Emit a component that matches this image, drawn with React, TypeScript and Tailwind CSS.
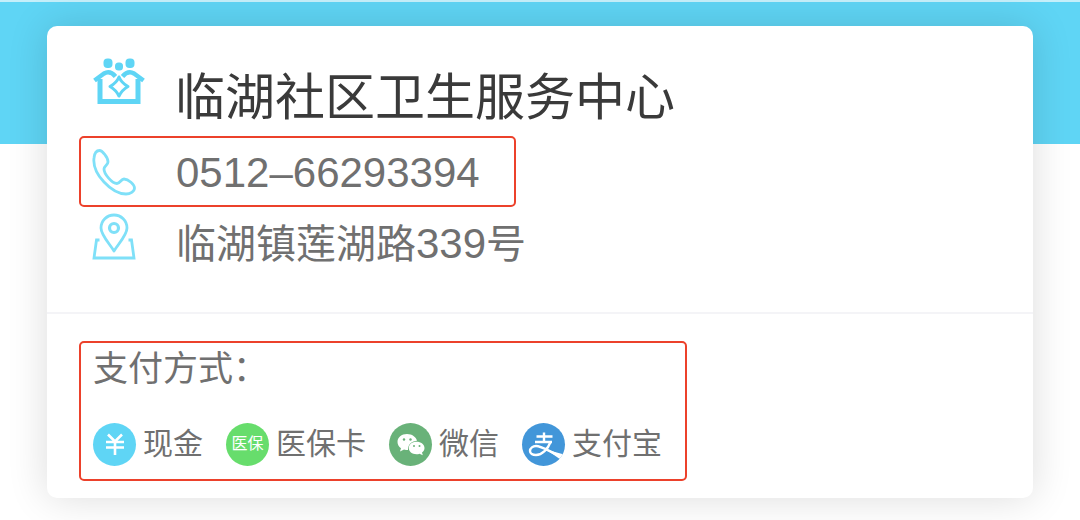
import type { ReactNode } from "react";

function ClinicIcon() {
  return (
    <svg viewBox="0 0 52 48" className="h-12 w-13 shrink-0" fill="none" aria-hidden="true">
      <g fill="#5fd5f5">
        <rect x="10.500" y="0.500" width="9" height="9.500" rx="4" />
        <rect x="22" y="4.500" width="8" height="8" rx="3.500" />
        <rect x="32.500" y="0.500" width="9" height="9.500" rx="4" />
      </g>
      <g stroke="#5fd5f5" strokeLinejoin="round">
        <path d="M7 21V43.500H45V21" strokeWidth="5" strokeLinejoin="miter" />
        <path d="M1.500 22.500L11 15.500Q17 12 22.500 18.500" strokeWidth="4.500" />
        <path d="M50.500 22.500L41 15.500Q35 12 29.500 18.500" strokeWidth="4.500" />
        <path d="M26 19Q28.500 25 35 28.500Q29 32 26 38Q23 32 17 28.500Q23.500 25 26 19Z" strokeWidth="3" />
      </g>
    </svg>
  );
}

function PhoneIcon() {
  return (
    <svg viewBox="0 0 44 48" className="h-12 w-11 shrink-0" fill="none" stroke="#7fe0f8" strokeWidth="2.800" strokeLinejoin="round" aria-hidden="true">
      <path d="M2 10C2.500 5 5 2.500 7.500 2.500C10 2.500 16 9 16 14C16 17 12 18 12 21C12 26 20 35.500 25 35.500C28 35.500 29 31 32 31C36.500 31 42.500 36.500 42.500 40C42.500 43.500 38 46 34 46C20 46 0 26 2 10Z" />
    </svg>
  );
}

function PinIcon() {
  return (
    <svg viewBox="0 0 44 48" className="h-12 w-11 shrink-0" fill="none" stroke="#7fe0f8" strokeWidth="2.800" aria-hidden="true">
      <path d="M22 38C17 30 9 22 9 15A13 13 0 0 1 35 15C35 22 27 30 22 38Z" strokeLinejoin="round" />
      <circle cx="22" cy="15" r="4.500" strokeWidth="3.200" />
      <path d="M7.500 27H4.500L2 45H42L39.500 27H36.500" />
    </svg>
  );
}

function YuanIcon() {
  return (
    <svg viewBox="0 0 24 24" className="size-6" fill="none" stroke="white" strokeWidth="2.600" aria-hidden="true">
      <path d="M5 2.500L12 9.500L19 2.500M3 10H21M3 15.500H21M12 9.500V23" />
    </svg>
  );
}

function WechatIcon() {
  return (
    <svg viewBox="0 0 43 43" className="size-full" fill="white" aria-hidden="true">
      <path d="M18 11C12.500 11 8.500 14.500 8.500 19C8.500 21.500 9.800 23.700 12 25.200L11 28.500L15 26.500Q17 27 19 27C19 21 23 18 28 17.800C27 13.800 23 11 18 11Z" />
      <path d="M27.500 18.800C23 18.800 19.800 21.500 19.800 25C19.800 28.500 23 31.200 27.500 31.200Q29.200 31.200 30.500 30.700L33.800 32.200L33 29.500C34.700 28.300 35.500 26.700 35.500 25C35.500 21.500 32 18.800 27.500 18.800Z" />
      <g fill="#69b279">
        <circle cx="15" cy="16.500" r="1.200" />
        <circle cx="21.500" cy="16.500" r="1.200" />
        <circle cx="25" cy="23" r="1" />
        <circle cx="30.500" cy="23" r="1" />
      </g>
    </svg>
  );
}

function AlipayIcon() {
  return (
    <svg viewBox="0 0 43 43" className="size-full" fill="none" stroke="white" aria-hidden="true">
      <path d="M22 9.500V20M14.500 13.500H30.500M13 19H30" strokeWidth="2.400" />
      <path d="M28.500 19C26 26 20 32 14 32C10.500 32 8 30.500 8 28C8 25 11 23 14 23C20 23 26 28 39 33.500" strokeWidth="2.400" />
      <path d="M24 26.500L42 31.500L38.500 36.500Z" fill="white" stroke="none" />
    </svg>
  );
}

function Payment({ color, icon, label }: { color: string; icon: ReactNode; label: string }) {
  return (
    <li className="flex items-center gap-[7px]">
      <span className={`flex size-[43px] shrink-0 items-center justify-center overflow-hidden rounded-full ${color}`}>{icon}</span>
      <span className="text-[30px] leading-11 whitespace-nowrap">{label}</span>
    </li>
  );
}

export default function App() {
  return (
    <div className="bg-white pb-6 font-['Liberation_Sans','Noto_Sans_CJK_SC',sans-serif] text-[#707070]">
      <div className="h-36 border-t-2 border-[#c5effa] bg-[#5fd5f5]" />
      <main className="relative mx-[47px] -mt-[118px] rounded-[10px] bg-white pb-[17px] shadow-[0_0_40px_rgba(0,0,0,0.14)]">
        <section className="border-b-2 border-[#f4f4f7] px-8 pt-8 pb-[37px]">
          <div className="flex items-start gap-[30px] pb-2 pl-[14px]">
            <ClinicIcon />
            <h1 className="font-['Noto_Sans_CJK_SC',sans-serif] text-[50px] leading-[70px] font-normal whitespace-nowrap text-[#3a3a3a]">临湖社区卫生服务中心</h1>
          </div>
          <a href="tel:0512-66293394" className="flex w-[437px] items-center gap-10 rounded-[5px] border-2 border-[#ec412b] pl-[11px]">
            <PhoneIcon />
            <span className="pt-[3px] text-[42px] leading-[64px] whitespace-nowrap">0512–66293394</span>
          </a>
          <address className="flex items-start gap-10 pt-[6px] pl-[13px] not-italic">
            <PinIcon />
            <span className="text-[40px] leading-[61px] whitespace-nowrap">
              临湖镇莲湖路<span className="text-[42px]">339</span>号
            </span>
          </address>
        </section>
        <section className="px-8 pt-[27px]">
          <div className="w-[608px] rounded-[5px] border-2 border-[#ec412b] px-3 pb-[13px]">
            <h2 className="font-['Noto_Sans_CJK_SC',sans-serif] text-[35px] leading-[46px] font-normal">支付方式：</h2>
            <ul className="flex gap-[23px] pt-[33px]">
              <Payment color="bg-[#5fd5f5]" icon={<YuanIcon />} label="现金" />
              <Payment
                color="bg-[#67dd6c]"
                icon={<span className="text-[16px] leading-none whitespace-nowrap text-white">医保</span>}
                label="医保卡"
              />
              <Payment color="bg-[#69b279]" icon={<WechatIcon />} label="微信" />
              <Payment color="bg-[#4296d9]" icon={<AlipayIcon />} label="支付宝" />
            </ul>
          </div>
        </section>
      </main>
    </div>
  );
}
